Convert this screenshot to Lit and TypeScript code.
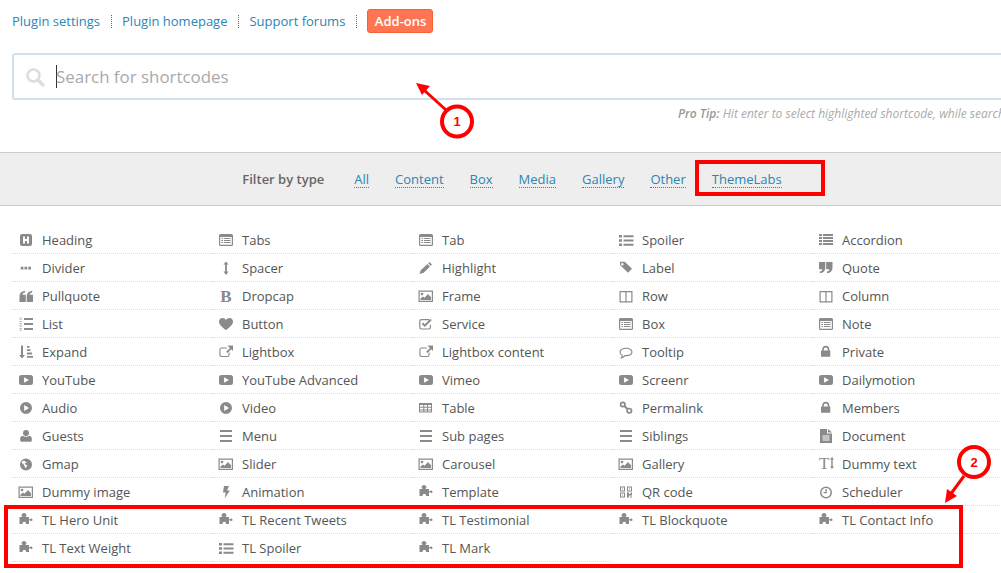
import { LitElement, html, css, svg } from "lit";
import { customElement } from "lit/decorators.js";

// every icon is drawn on a 20x20 box centred on its row
const listAlt = svg`<path fill-rule="evenodd" d="M4.500 4h11A1.500 1.500 0 0 1 17 5.500v9a1.500 1.500 0 0 1-1.500 1.500h-11A1.500 1.500 0 0 1 3 14.500v-9A1.500 1.500 0 0 1 4.500 4zM4.200 7v7.500a.3.3 0 0 0 .3.3h11a.3.3 0 0 0 .3-.3V7z"/><path d="M5.500 8h1.600v1H5.500zM8 8h6.500v1H8zM5.500 10h1.600v1H5.500zM8 10h6.500v1H8zM5.500 12h1.600v1H5.500zM8 12h6.500v1H8z"/>`;
const play = svg`<path fill-rule="evenodd" d="M5.500 5h9A2.500 2.500 0 0 1 17 7.500v5a2.500 2.500 0 0 1-2.500 2.500h-9A2.500 2.500 0 0 1 3 12.500v-5A2.500 2.500 0 0 1 5.500 5zM8 7.200v5.600l5-2.800z"/>`;
const playCircle = svg`<path fill-rule="evenodd" d="M10 4a6 6 0 1 1 0 12 6 6 0 0 1 0-12zM8.200 7v6l4.800-3z"/>`;
const bars = svg`<path d="M4 4h12v2H4zM4 9h12v2H4zM4 14h12v2H4z"/>`;
const picture = svg`<path fill-rule="evenodd" d="M2.500 4.500H17V16H2.500zM3.700 5.700v9.100h12.100V5.700z"/><circle cx="6" cy="8" r="1.300"/><path d="M4.500 14v-1.500l2.500-2 1.500 1.200L12 8l3 3.200V14z"/>`;
const puzzle = svg`<path d="M3.500 14V7H6.500C5.800 6.300 5.600 5.800 5.600 5.200 5.600 4 6.700 3 8 3s2.400 1 2.400 2.200c0 .6-.2 1.100-.9 1.800H13v2.300h1c.3-.5.800-.8 1.300-.8.7 0 1.200.6 1.200 1.300s-.5 1.300-1.200 1.300c-.5 0-1-.3-1.300-.8h-1V14h-3c.3-1.200-.5-2.200-1.700-2.200S6.300 12.800 6.500 14z"/>`;
const spoiler = svg`<path d="M3 5h3v2.500H3zM7.500 5.200h10v2h-10zM3 9.250h3v2.500H3zM7.500 9.500h10v2h-10zM3 13.500h3V16H3zM7.500 13.700h10v2h-10z"/>`;
const lock = svg`<path fill-rule="evenodd" d="M6.300 8.500V7.300a3.500 3.500 0 0 1 7 0v1.200h1v6.200H5v-6.200zM7.900 8.500h3.800V7.300a1.900 1.900 0 0 0-3.800 0z"/>`;
const columns = svg`<path fill-rule="evenodd" d="M3.500 5h13v11.500h-13zM4.700 6.200v9.100h4.700V6.200zM10.600 6.200v9.100h4.700V6.200z"/>`;
const external = svg`<path d="M5.500 5.500H11v1.100H5.500a1 1 0 0 0-1 1v5.300a1 1 0 0 0 1 1h6a1 1 0 0 0 1-1v-2.400h1.100v2.400a2.100 2.100 0 0 1-2.100 2.100h-6a2.100 2.100 0 0 1-2.100-2.100V7.600a2.100 2.100 0 0 1 2.100-2.100z"/><path d="M11.500 3.500H17V9l-1.800-1.800-3.800 3.800-1.300-1.300 3.800-3.800z"/>`;

const icons: Record<string, unknown> = {
  heading: svg`<path fill-rule="evenodd" d="M6 4h8a2 2 0 0 1 2 2v8a2 2 0 0 1-2 2H6a2 2 0 0 1-2-2V6a2 2 0 0 1 2-2zM7 6.500v7h2V11h2v2.500h2v-7h-2V9H9V6.500z"/>`,
  listAlt,
  spoiler,
  accordion: svg`<path d="M3 4h3v2H3zM7 4h10v2H7zM3 7h3v2H3zM7 7h10v2H7zM3 10h3v2H3zM7 10h10v2H7zM3 13h3v2H3zM7 13h10v2H7z"/>`,
  divider: svg`<path d="M4.700 8.700h2.700v2.700H4.700zM8.500 8.700h2.700v2.700H8.500zM12.300 8.700H15v2.700h-2.700z"/>`,
  spacer: svg`<path d="M10 3.500l2.500 3h-1.600v7h1.600L10 17l-2.500-3.500h1.600v-7H7.500z"/>`,
  pencil: svg`<path d="M13.500 4l2.500 2.500-1.300 1.300-2.500-2.500zM11.500 6l2.500 2.500-6.300 6.300L3.500 16l1.200-3.800z"/>`,
  tag: svg`<path fill-rule="evenodd" d="M4 3.700h4.800l7.200 7-4 4-8-7.700zM6.300 5a1.200 1.200 0 1 0 0 2.400 1.200 1.200 0 0 0 0-2.400z"/>`,
  pullquote: svg`<path d="M3.500 10.500c0-3.300 1.800-5.300 5.500-5.800v1.800c-1.700.3-2.500 1-2.500 2.300h3.300V16H3.500zM10.700 10.500c0-3.300 1.800-5.300 5.500-5.800v1.800c-1.700.3-2.500 1-2.500 2.300H17V16h-6.300z"/>`,
  quote: svg`<g transform="rotate(180 10 10)"><path d="M3.500 10.500c0-3.300 1.800-5.300 5.500-5.800v1.800c-1.700.3-2.500 1-2.500 2.300h3.300V16H3.500zM10.700 10.500c0-3.300 1.800-5.300 5.500-5.800v1.800c-1.700.3-2.500 1-2.500 2.300H17V16h-6.300z"/></g>`,
  dropcap: svg`<text x="10" y="15.500" text-anchor="middle" class="glyph" font-size="17">B</text>`,
  picture,
  columns,
  listOl: svg`<path d="M8 4h9v2H8zM8 9h9v2H8zM8 14h9v2H8z"/><path d="M3.500 3.800H6v.7H3.500zM3.500 5.400H6v.7H3.500zM3.500 7H6v.7H3.500zM3.500 9.200H6v.7H3.500zM3.500 10.800H6v.7H3.500zM3.500 12.400H6v.7H3.500zM3.500 14.200H6v.7H3.500zM3.500 15.800H6v.7H3.500z" opacity=".8"/>`,
  heart: svg`<path d="M10 16.300C6 13 3 10.800 3 7.600 3 5.500 4.500 4 6.500 4c1.500 0 2.800.8 3.500 2.100C10.700 4.800 12 4 13.500 4 15.500 4 17 5.500 17 7.600c0 3.200-3 5.400-7 8.700z"/>`,
  check: svg`<path d="M5.500 5H13v1.200H5.500a1.100 1.100 0 0 0-1.100 1.100v6a1.100 1.100 0 0 0 1.100 1.100h7.200a1.100 1.100 0 0 0 1.100-1.100v-2.500H15v2.500a2.300 2.300 0 0 1-2.300 2.300H5.500a2.300 2.300 0 0 1-2.300-2.300v-6A2.300 2.300 0 0 1 5.500 5z"/><path d="M8.800 13.100L5.700 10l1.400-1.400 1.700 1.700 5.500-5.500 1.400 1.400z"/>`,
  expand: svg`<path d="M5 3.500h2V13h2l-3 3.500L3 13h2zM11 4h2.500v1.800H11zM11 7.300h3.500v1.800H11zM11 10.600h5v1.800h-5zM11 13.900h6v1.800h-6z"/>`,
  external,
  comment: svg`<g transform="translate(-.5 .7)"><path fill-rule="evenodd" d="M10.500 5c3.800 0 6.500 1.800 6.500 4.200s-2.700 4.300-6.500 4.300h-1c-1.200 1.300-2.900 2.200-5 2.500 1-.9 1.600-2 1.700-3.300C4.900 12 4 10.700 4 9.200 4 6.800 6.700 5 10.500 5zm0 1c-3.200 0-5.400 1.400-5.400 3.200 0 1.300.9 2.300 2.200 2.900 0 .7-.2 1.400-.6 2 1-.4 1.800-1.100 2.400-1.800h1.400c3.200 0 5.400-1.300 5.400-3.100S13.700 6 10.500 6z"/></g>`,
  lock,
  play,
  playCircle,
  table: svg`<path fill-rule="evenodd" d="M3 5h13v9.500H3zM4 7v1.700h3.300V7zM8.300 7v1.700H11V7zM12 7v1.700h3V7zM4 9.700v1.700h3.300V9.700zM8.300 9.700v1.700H11V9.700zM12 9.700v1.700h3V9.700zM4 12.400v1.100h3.300v-1.100zM8.300 12.400v1.100H11v-1.100zM12 12.400v1.100h3v-1.100z"/>`,
  link: svg`<g fill="none" stroke="#8a8a8a"><circle cx="6.800" cy="6.500" r="2.200" stroke-width="1.700"/><circle cx="13.300" cy="12.700" r="2.200" stroke-width="1.700"/><path d="M8.500 8.200l3 2.800" stroke-width="2"/></g>`,
  user: svg`<circle cx="10" cy="7" r="3"/><path d="M6.500 9.800c1 .7 2.200 1 3.500 1s2.500-.3 3.500-1c1.400.3 2.300 1.500 2.300 3v1.700c0 .8-.5 1.200-1.200 1.200H5.400c-.7 0-1.200-.4-1.200-1.200v-1.700c0-1.500.9-2.700 2.300-3z"/>`,
  bars,
  document: svg`<path fill-rule="evenodd" d="M4 3h7v4.500h5V17H4zM6.500 9.500v1h7v-1zM6.500 11.500v1h7v-1zM6.500 13.500v1h7v-1z"/><path d="M12 3l4 3.500h-4z"/>`,
  globe: svg`<path fill-rule="evenodd" d="M10 4.500a6 6 0 1 1 0 12 6 6 0 0 1 0-12zM7 6.800c-.8.500-1.400 1.300-1.400 2.200.6.600 1.500.6 2 1.200.5.800.1 1.300.9 1.800.6.400.5 1.300.6 2.100 1-.3 2.100-1.700 2-2.600-.2-.8-1.400-.9-2.100-1.200-.5-.3-.4-.9.100-1.100.7-.2 1.200-.3 1.400-1.100-.6-.6-1.500-.5-1.700-1.200z"/>`,
  dummy: svg`<text x="3" y="15" class="glyph thin" font-size="17">T</text><path d="M16 3l2 2.500h-1.300v7H18L16 15l-2-2.500h1.300v-7H14z"/>`,
  bolt: svg`<path d="M8 4h5l-2 4.500h3l-5.500 8 1.300-6H7z"/>`,
  puzzle,
  qr: svg`<path fill-rule="evenodd" d="M4 4.500h5v5H4zM5 5.500v3h3v-3zM11 4.500h5v5h-5zM12 5.500v3h3v-3zM4 10.500h5v5H4zM5 11.500v3h3v-3z"/><path d="M6 6.500h1v1H6zM13 6.500h1v1h-1zM6 12.500h1v1H6zM11 10.500h2V12h1.500v-1.500H16v3h-3v2h-2zM14 14.500h2v1h-2z"/>`,
  clock: svg`<path fill-rule="evenodd" d="M10 4.500a6 6 0 1 1 0 12 6 6 0 0 1 0-12zM10 6a4.500 4.500 0 1 0 0 9 4.500 4.500 0 0 0 0-9z"/><path d="M9.500 7h1.300v4.300H7.500v-1.200h2z"/>`,
};

const rows: [string, string][][] = [
  [["heading", "Heading"], ["listAlt", "Tabs"], ["listAlt", "Tab"], ["spoiler", "Spoiler"], ["accordion", "Accordion"]],
  [["divider", "Divider"], ["spacer", "Spacer"], ["pencil", "Highlight"], ["tag", "Label"], ["quote", "Quote"]],
  [["pullquote", "Pullquote"], ["dropcap", "Dropcap"], ["picture", "Frame"], ["columns", "Row"], ["columns", "Column"]],
  [["listOl", "List"], ["heart", "Button"], ["check", "Service"], ["listAlt", "Box"], ["listAlt", "Note"]],
  [["expand", "Expand"], ["external", "Lightbox"], ["external", "Lightbox content"], ["comment", "Tooltip"], ["lock", "Private"]],
  [["play", "YouTube"], ["play", "YouTube Advanced"], ["play", "Vimeo"], ["play", "Screenr"], ["play", "Dailymotion"]],
  [["playCircle", "Audio"], ["playCircle", "Video"], ["table", "Table"], ["link", "Permalink"], ["lock", "Members"]],
  [["user", "Guests"], ["bars", "Menu"], ["bars", "Sub pages"], ["bars", "Siblings"], ["document", "Document"]],
  [["globe", "Gmap"], ["picture", "Slider"], ["picture", "Carousel"], ["picture", "Gallery"], ["dummy", "Dummy text"]],
  [["picture", "Dummy image"], ["bolt", "Animation"], ["puzzle", "Template"], ["qr", "QR code"], ["clock", "Scheduler"]],
  [["puzzle", "TL Hero Unit"], ["puzzle", "TL Recent Tweets"], ["puzzle", "TL Testimonial"], ["puzzle", "TL Blockquote"], ["puzzle", "TL Contact Info"]],
  [["puzzle", "TL Text Weight"], ["spoiler", "TL Spoiler"], ["puzzle", "TL Mark"]],
];

const filters = ["All", "Content", "Box", "Media", "Gallery", "Other", "ThemeLabs"];

@customElement("app-root")
export class AppRoot extends LitElement {
  static styles = css`
    :host {
      display: block;
      width: 1001px;
      height: 573px;
      overflow: hidden;
      position: relative;
      background: #fff;
      font-family: "Open Sans", sans-serif;
      font-size: 13px;
      color: #555;
    }
    .page {
      width: 1024px;
    }
    .nav {
      display: flex;
      align-items: center;
      height: 24px;
      margin: 9px 12px 0;
    }
    .nav a {
      color: #2a86b3;
      white-space: nowrap;
    }
    .nav .sep {
      height: 13px;
      border-left: 1px dotted #666;
      margin: 0 10.5px;
    }
    .addons {
      height: 22px;
      line-height: 22px;
      padding: 0 6px 0 6.5px;
      background: #ff7552;
      border: 1px solid #f4623c;
      border-radius: 3px;
      font-weight: 600;
    }
    .nav a.addons {
      color: #fff;
    }
    .search {
      display: flex;
      align-items: center;
      box-sizing: border-box;
      height: 47px;
      margin: 20px 12px 0;
      border: 2px solid #d0e1ec;
      border-radius: 3px;
      padding-left: 11px;
    }
    .search svg {
      width: 20px;
      height: 20px;
      flex: none;
    }
    .caret {
      width: 1px;
      height: 23px;
      margin-left: 11px;
      margin-right: -1px;
      background: #333;
      flex: none;
    }
    .placeholder {
      font-size: 16.9px;
      color: #aaa;
    }
    .tip {
      height: 16px;
      line-height: 16px;
      margin: 6px 3px 0 0;
      text-align: right;
      font-size: 12px;
      font-style: italic;
      color: #aaa;
      white-space: nowrap;
    }
    .tip b {
      font-weight: 600;
      color: #999;
    }
    .filter {
      display: flex;
      justify-content: center;
      align-items: center;
      gap: 26px;
      box-sizing: border-box;
      height: 54px;
      margin-top: 30px;
      background: #eee;
      border-top: 1px solid #ccc;
      border-bottom: 1px solid #ccc;
    }
    .filter b {
      font-weight: 600;
      color: #666;
      margin-right: 4px;
    }
    .filter a {
      color: #2a86b3;
      border-bottom: 1px dotted #2a86b3;
      line-height: 16px;
    }
    .grid {
      display: grid;
      grid-template-columns: repeat(5, 200px);
      grid-auto-rows: 28px;
      margin: 20px 12px 0;
    }
    .item {
      display: flex;
      align-items: center;
      gap: 6px;
      box-sizing: border-box;
      padding-left: 4px;
      border-bottom: 1px dotted #ddd;
      white-space: nowrap;
    }
    .item svg {
      width: 20px;
      height: 20px;
      flex: none;
      fill: #8a8a8a;
      margin-top: 1px;
    }
    .glyph {
      font-family: "Liberation Serif", serif;
      font-weight: 700;
      fill: #8a8a8a;
    }
    .thin {
      font-weight: 400;
    }
    .marks {
      position: absolute;
      left: 0;
      top: 0;
      width: 1001px;
      height: 573px;
      pointer-events: none;
    }
    .marks text {
      font-family: "Liberation Sans", sans-serif;
      font-size: 13px;
      font-weight: 700;
      fill: #f00;
      text-anchor: middle;
    }
  `;

  render() {
    return html`
      <div class="page">
        <div class="nav">
          <a>Plugin settings</a><span class="sep"></span>
          <a>Plugin homepage</a><span class="sep"></span>
          <a>Support forums</a><span class="sep"></span>
          <a class="addons">Add-ons</a>
        </div>
        <div class="search">
          <svg viewBox="0 0 20 20">
            <circle cx="8.500" cy="8.500" r="6" fill="none" stroke="#ddd" stroke-width="2.500" />
            <path d="M13 13l5 5" stroke="#ddd" stroke-width="3.500" stroke-linecap="round" />
          </svg>
          <span class="caret"></span>
          <span class="placeholder">Search for shortcodes</span>
        </div>
        <div class="tip"><b>Pro Tip:</b> Hit enter to select highlighted shortcode, while searching</div>
        <div class="filter">
          <b>Filter by type</b>
          ${filters.map((f) => html`<a>${f}</a>`)}
        </div>
        <div class="grid">
          ${rows.flat().map(
            ([icon, label]) => html`
              <div class="item">
                <svg viewBox="0 0 20 20">${icons[icon]}</svg>
                <span>${label}</span>
              </div>
            `
          )}
        </div>
      </div>
      <svg class="marks" viewBox="0 0 1001 573">
        <g fill="none" stroke="#f00" stroke-width="4">
          <rect x="697" y="162" width="126" height="32" />
          <rect x="6" y="507" width="955" height="59" />
          <circle cx="457" cy="121.500" r="15" fill="#fff" />
          <circle cx="974" cy="462" r="15" fill="#fff" />
          <path d="M446 110L424 90" stroke-width="3" />
          <path d="M964 476L950 495" stroke-width="3" />
        </g>
        <path d="M416 83l14 3-8 9z" fill="#f00" />
        <path d="M945 503l2-14 10 7z" fill="#f00" />
        <text x="457" y="126">1</text>
        <text x="974" y="467">2</text>
      </svg>
    `;
  }
}
